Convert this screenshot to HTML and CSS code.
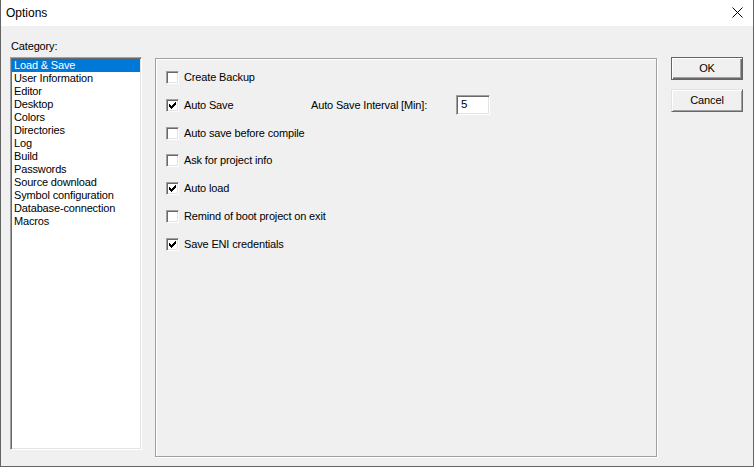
FILE: index.html
```html
<!DOCTYPE html>
<html>
<head>
<meta charset="utf-8">
<link rel="stylesheet" href="styles.css">
</head>
<body>
<div class="window">
  <div class="titlebar">
    <span class="title">Options</span>
    <svg class="close" width="11" height="11" viewBox="0 0 11 11"><path d="M0.5 0.5L10.5 10.5M10.5 0.5L0.5 10.5" stroke="#000" stroke-width="1" fill="none"/></svg>
  </div>
  <div class="content">
    <div class="leftcol">
      <div class="catlabel">Category:</div>
      <div class="listbox">
        <div class="item selected">Load &amp; Save</div>
        <div class="item">User Information</div>
        <div class="item">Editor</div>
        <div class="item">Desktop</div>
        <div class="item">Colors</div>
        <div class="item">Directories</div>
        <div class="item">Log</div>
        <div class="item">Build</div>
        <div class="item">Passwords</div>
        <div class="item">Source download</div>
        <div class="item">Symbol configuration</div>
        <div class="item">Database-connection</div>
        <div class="item">Macros</div>
      </div>
    </div>
    <div class="panel">
      <div class="row"><span class="cb"></span><span class="lbl">Create Backup</span></div>
      <div class="row"><span class="cb"><svg width="9" height="9" viewBox="0 0 9 9" shape-rendering="crispEdges"><path d="M1 3h1v3h-1zM2 4h1v3h-1zM3 5h1v3h-1zM4 4h1v3h-1zM5 3h1v3h-1zM6 2h1v3h-1zM7 1h1v3h-1z" fill="#000"/></svg></span><span class="lbl wide">Auto Save</span><span class="intlbl">Auto Save Interval [Min]:</span><span class="field">5</span></div>
      <div class="row"><span class="cb"></span><span class="lbl">Auto save before compile</span></div>
      <div class="row"><span class="cb"></span><span class="lbl">Ask for project info</span></div>
      <div class="row"><span class="cb"><svg width="9" height="9" viewBox="0 0 9 9" shape-rendering="crispEdges"><path d="M1 3h1v3h-1zM2 4h1v3h-1zM3 5h1v3h-1zM4 4h1v3h-1zM5 3h1v3h-1zM6 2h1v3h-1zM7 1h1v3h-1z" fill="#000"/></svg></span><span class="lbl">Auto load</span></div>
      <div class="row"><span class="cb"></span><span class="lbl">Remind of boot project on exit</span></div>
      <div class="row"><span class="cb"><svg width="9" height="9" viewBox="0 0 9 9" shape-rendering="crispEdges"><path d="M1 3h1v3h-1zM2 4h1v3h-1zM3 5h1v3h-1zM4 4h1v3h-1zM5 3h1v3h-1zM6 2h1v3h-1zM7 1h1v3h-1z" fill="#000"/></svg></span><span class="lbl">Save ENI credentials</span></div>
    </div>
    <div class="buttons">
      <div class="btn default">OK</div>
      <div class="btn">Cancel</div>
    </div>
  </div>
</div>
</body>
</html>
```
FILE: styles.css
```css
html, body {
  margin: 0;
  padding: 0;
  background: #f0f0f0;
}
body {
  font-family: "Liberation Sans", Arial, sans-serif;
  font-size: 11px;
  letter-spacing: -0.15px;
  color: #000;
}
.window {
  box-sizing: border-box;
  width: 754px;
  height: 467px;
  border: 1px solid #646464;
  border-top: none;
  background: #f0f0f0;
  display: flex;
  flex-direction: column;
}
.titlebar {
  height: 26px;
  background: #fff;
  display: flex;
  align-items: center;
  justify-content: space-between;
  padding: 0 10px 0 5px;
  flex-shrink: 0;
}
.title {
  font-size: 12px;
  line-height: 14px;
  letter-spacing: 0;
  margin-top: -1px;
}
.close {
  display: block;
  margin-top: -1px;
}
.content {
  display: flex;
  align-items: flex-start;
  padding: 14px 0 0 9px;
}
.leftcol {
  display: flex;
  flex-direction: column;
  width: 132px;
}
.catlabel {
  line-height: 13px;
  height: 13px;
  padding-left: 1px;
  margin-bottom: 4px;
}
.listbox {
  box-sizing: border-box;
  height: 393px;
  background: #fff;
  border: 1px solid;
  border-color: #a0a0a0 #fff #fff #a0a0a0;
  box-shadow: inset 1px 1px 0 #696969, inset -1px -1px 0 #e3e3e3;
  padding: 1px;
}
.item {
  height: 13px;
  line-height: 13px;
  padding-left: 2px;
  white-space: nowrap;
}
.item.selected {
  background: #0078d7;
  color: #fff;
}
.panel {
  box-sizing: border-box;
  width: 502px;
  height: 399px;
  margin: 18px 0 0 13px;
  border: 1px solid #a0a0a0;
  box-shadow: inset 1px 1px 0 #fff, 1px 1px 0 #fff;
  padding: 12px 0 0 10px;
  display: flex;
  flex-direction: column;
  gap: 14.8px;
}
.row {
  height: 13px;
  display: flex;
  align-items: center;
  white-space: nowrap;
}
.cb {
  box-sizing: border-box;
  width: 13px;
  height: 13px;
  flex-shrink: 0;
  background: #fff;
  border: 1px solid;
  border-color: #a0a0a0 #fff #fff #a0a0a0;
  box-shadow: inset 1px 1px 0 #696969, inset -1px -1px 0 #e3e3e3;
  padding: 1px;
  display: flex;
}
.cb svg {
  display: block;
}
.lbl {
  margin-left: 5px;
  line-height: 13px;
}
.lbl.wide {
  width: 127px;
}
.intlbl {
  width: 145px;
  line-height: 13px;
}
.field {
  box-sizing: border-box;
  width: 34px;
  height: 20px;
  background: #fff;
  border: 1px solid;
  border-color: #a0a0a0 #fff #fff #a0a0a0;
  box-shadow: inset 1px 1px 0 #696969, inset -1px -1px 0 #e3e3e3;
  padding-left: 4px;
  line-height: 17px;
  font-size: 11.5px;
}
.buttons {
  display: flex;
  flex-direction: column;
  gap: 9px;
  margin: 17px 0 0 14px;
}
.btn {
  box-sizing: border-box;
  width: 72px;
  height: 23px;
  border: 1px solid;
  border-color: #e3e3e3 #696969 #696969 #e3e3e3;
  box-shadow: inset 1px 1px 0 #fff, inset -1px -1px 0 #a0a0a0;
  display: flex;
  align-items: center;
  justify-content: center;
  line-height: 13px;
}
.btn.default {
  border: 1px solid #646464;
  box-shadow: inset 1px 1px 0 #fff, inset -1px -1px 0 #696969, inset -2px -2px 0 #a0a0a0;
}
```
